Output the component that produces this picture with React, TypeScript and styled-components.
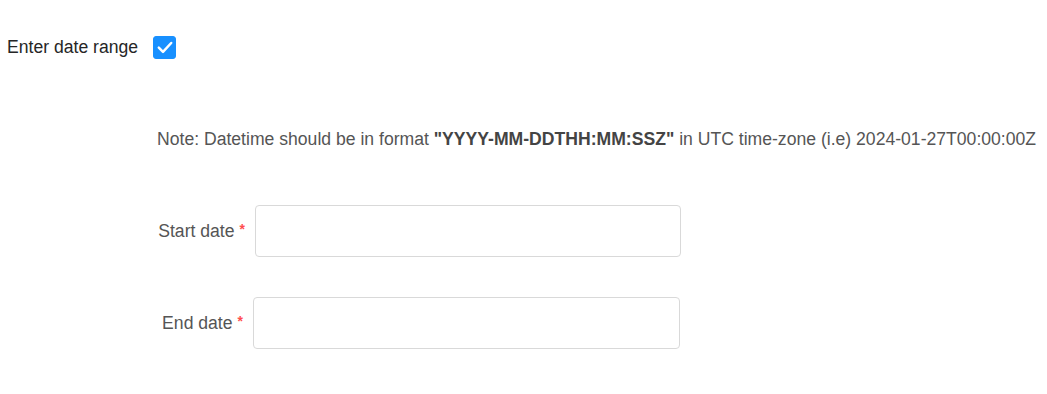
import React from "react";
import styled, { createGlobalStyle } from "styled-components";

const GlobalStyle = createGlobalStyle`
  html, body { margin: 0; padding: 0; background: #ffffff; }
  body { font-family: "Liberation Sans", Arial, sans-serif; }
`;

const Page = styled.div`
  padding: 35px 8px 0 7px;
  display: flex;
  flex-direction: column;
`;

const TopRow = styled.label`
  display: flex;
  align-items: center;
  gap: 15px;
  height: 24px;
  font-size: 17.6px;
  color: #262626;
  cursor: pointer;
`;

const CheckBox = styled.span<{ $checked: boolean }>`
  width: 23px;
  height: 23px;
  box-sizing: border-box;
  border-radius: 3px;
  background: ${(p) => (p.$checked ? "#1890ff" : "#fff")};
  border: 1px solid ${(p) => (p.$checked ? "#1890ff" : "#d9d9d9")};
  display: flex;
  align-items: center;
  justify-content: center;
`;

const Note = styled.p`
  margin: 70px 0 0 150px;
  font-size: 17.6px;
  line-height: 20px;
  color: #555555;
  white-space: nowrap;
`;

const Strong = styled.b`
  font-weight: 700;
  color: #444444;
`;

const Fields = styled.div`
  margin-top: 56px;
  display: flex;
  flex-direction: column;
  gap: 40px;
`;

const FieldRow = styled.div`
  display: flex;
  align-items: center;
`;

const Label = styled.div<{ $width: number }>`
  width: ${(p) => p.$width}px;
  box-sizing: border-box;
  padding-right: 10px;
  display: flex;
  justify-content: flex-end;
  align-items: center;
  font-size: 17.6px;
  color: #555555;
`;

const Required = styled.span`
  color: #ff4d4f;
  font-size: 14px;
  font-weight: 700;
  margin-left: 5px;
  position: relative;
  top: -2px;
`;

const Input = styled.input<{ $width: number }>`
  width: ${(p) => p.$width}px;
  height: 52px;
  box-sizing: border-box;
  border: 1px solid #d9d9d9;
  border-radius: 4px;
  padding: 0 12px;
  font-family: inherit;
  font-size: 17.6px;
  outline: none;
  background: #fff;
`;

export default function App() {
  const [checked, setChecked] = React.useState(true);
  return (
    <>
      <GlobalStyle />
      <Page>
        <TopRow onClick={() => setChecked((c) => !c)}>
          <span>Enter date range</span>
          <CheckBox $checked={checked}>
            {checked && (
              <svg width="16" height="13" viewBox="0 0 16 13" fill="none">
                <path
                  d="M1.8 6.6 L6 10.8 L14.2 2"
                  stroke="#fff"
                  strokeWidth="2.5"
                  strokeLinecap="round"
                  strokeLinejoin="round"
                />
              </svg>
            )}
          </CheckBox>
        </TopRow>
        <Note>
          Note: Datetime should be in format <Strong>"YYYY-MM-DDTHH:MM:SSZ"</Strong> in UTC
          time-zone (i.e) 2024-01-27T00:00:00Z
        </Note>
        <Fields>
          <FieldRow>
            <Label $width={248}>
              Start date<Required>*</Required>
            </Label>
            <Input $width={426} />
          </FieldRow>
          <FieldRow>
            <Label $width={246}>
              End date<Required>*</Required>
            </Label>
            <Input $width={427} />
          </FieldRow>
        </Fields>
      </Page>
    </>
  );
}
